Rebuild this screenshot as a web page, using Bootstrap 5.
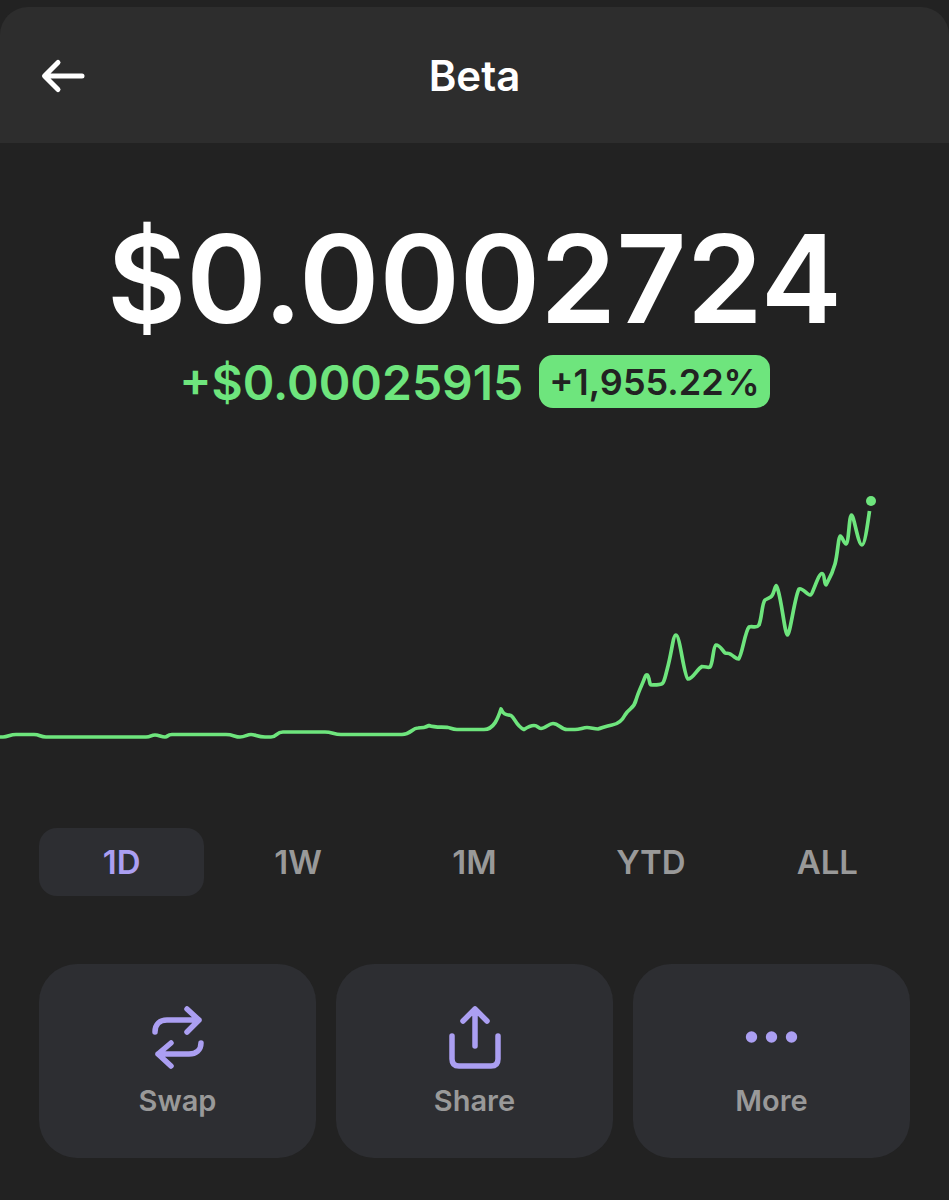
<!DOCTYPE html>
<html lang="en" data-bs-theme="dark">
<head>
<meta charset="utf-8">
<meta name="viewport" content="width=device-width, initial-scale=1">
<title>Beta</title>
<link href="https://cdn.jsdelivr.net/npm/bootstrap@5.3.0/dist/css/bootstrap.min.css" rel="stylesheet">
<style>
body{background:#222;font-family:Inter,"Liberation Sans",sans-serif}
.top-bar{background:#2d2d2d;height:136px;border-radius:28px 28px 0 0;padding:2px 40px 0;margin-top:7px}
.side{width:46px}
.title{font-size:42px;line-height:48px;font-weight:600}
.price{font-size:122px;line-height:148px;font-weight:600;margin-top:62px}
.delta{color:#6ee57d;font-size:48px;line-height:60px;font-weight:600}
.pct{background:#6ee57d;color:#222;font-size:36px;line-height:51px;font-weight:600;border-radius:14px;padding:2px 10px 0;margin-top:2px}
.chart{margin-top:47px}
.ranges{padding:0 39px;margin-top:48px;gap:11px}
.ranges .btn{flex:1 1 0;height:68px;border-radius:18px;font-size:33px;line-height:40px;font-weight:600;color:#999;border:0;padding:0}
.ranges .btn.active{background:#2d2e32;color:#ab9ff2}
.actions{padding:0 39px 40px;margin-top:68px;gap:20px}
.actions .btn{flex:1 1 0;height:194px;border-radius:38px;background:#2d2e32;border:0;color:#999;font-size:29px;line-height:36px;font-weight:600;padding:0}
.actions svg{color:#ab9ff2}
</style>
</head>
<body>
<header class="top-bar d-flex align-items-center justify-content-between">
  <a href="#" class="side d-flex text-white" aria-label="Back">
    <svg width="46" height="36" viewBox="0 0 46 36" fill="none" stroke="currentColor" stroke-width="5" stroke-linecap="round" stroke-linejoin="round"><path d="M42 18H5M18 4.500L4.500 18L18 31.500"/></svg>
  </a>
  <h1 class="title m-0 text-white">Beta</h1>
  <span class="side"></span>
</header>
<main>
  <div class="price text-white text-center">$0.0002724</div>
  <div class="d-flex justify-content-center align-items-start gap-3">
    <span class="delta">+$0.00025915</span>
    <span class="pct">+1,955.22%</span>
  </div>
  <svg class="chart d-block w-100" viewBox="0 460 949 320" role="img" aria-label="Price over one day">
    <path fill="none" stroke="#6ee57d" stroke-width="3.700" stroke-linejoin="round" d="M0 737H3C8 737 10 734.500 16 734.500H34C40 734.500 40 737 46 737H146C151 737 151 735 155 735S161 737 165 737C168 737 167 734.500 172 734.500H226C233 734.500 235 737 240 737S247 734.500 251 734.500S258 737 265 737H271C277 737 276 732 283 732H325C332 732 334 734.500 341 734.500H402C411 734.500 412 728 418 728C425 727.500 425 727.500 429 725.500C434 727.500 438 727 447 727.300C451 728 452 729.500 457 729.500H484C494 729.500 498 718 501 709C503 714 505 714.500 511 715.500C515 718 516 726 524 729.500C527 727.500 530 725.500 534 725.500S538 728.500 541 728.500C545 728.500 549 723.500 553 723.500C559 723.500 561 729.500 567 729.500H575C580 729.500 583 727.500 587 727.500S594 729 598 729C602 728 606 726 612 725C618 724 622 721 625 715C629 708 634 709 636 700C639 690 643 683 645 677C647 673 648 675 649 679C650 684 650 685 652 685C665 684.500 663 685 667 670C672 652 673 635 676 635C680 635 684 677 688 679C693 679 697 669 702 666.500C706 666.500 708 668 710 667C713 664 713 646 716 645C720 645 722 650 725 653C728 653.500 729 653 731 654.500C735 657 736 659 738.500 659C742 656 745 631 749 627C753 625.500 756 629 759 625C762 617 762 603 765 600C770 597 772 598 774 591C776 585 776 583 778 590C782 603 785 635 787.500 635S795 595 799 589C802 587 807 595 810 595S818 573.500 822 573.500C825 573.500 824 585 826 585C828 581 832 575 835 564C838 553 838 537 840.500 536C842 536 844 544 846 544C849 543 849 515 851.500 515C854 515 858 545 862 545C865 545 868 521 869.500 511"/>
    <circle cx="871" cy="501" r="5" fill="#6ee57d"/>
  </svg>
  <div class="ranges d-flex" role="group" aria-label="Time range">
    <button type="button" class="btn active" aria-pressed="true">1D</button>
    <button type="button" class="btn">1W</button>
    <button type="button" class="btn">1M</button>
    <button type="button" class="btn">YTD</button>
    <button type="button" class="btn">ALL</button>
  </div>
  <div class="actions d-flex">
    <button type="button" class="btn d-flex flex-column align-items-center justify-content-center gap-2">
      <svg width="64" height="72" viewBox="0 0 64 72" fill="none" stroke="currentColor" stroke-width="5.500" stroke-linecap="round" stroke-linejoin="round"><path d="M9 29C9 21 14 17 21 17H53M41 6L53 17L41 29M55 40C55 47 50 51 43 51H12M25 40L12 51L25 63"/></svg>
      <span>Swap</span>
    </button>
    <button type="button" class="btn d-flex flex-column align-items-center justify-content-center gap-2">
      <svg width="64" height="72" viewBox="0 0 64 72" fill="none" stroke="currentColor" stroke-width="5.500" stroke-linecap="round" stroke-linejoin="round"><path d="M32 43V6M20 18L32 6L44 18M9 33V56Q9 63 16 63H48Q55 63 55 56V33"/></svg>
      <span>Share</span>
    </button>
    <button type="button" class="btn d-flex flex-column align-items-center justify-content-center gap-2">
      <svg width="64" height="72" viewBox="0 0 64 72" fill="currentColor"><circle cx="11.500" cy="34" r="5.700"/><circle cx="31.500" cy="34" r="5.700"/><circle cx="51.500" cy="34" r="5.700"/></svg>
      <span>More</span>
    </button>
  </div>
</main>
<script src="https://cdn.jsdelivr.net/npm/bootstrap@5.3.0/dist/js/bootstrap.bundle.min.js"></script>
</body>
</html>
